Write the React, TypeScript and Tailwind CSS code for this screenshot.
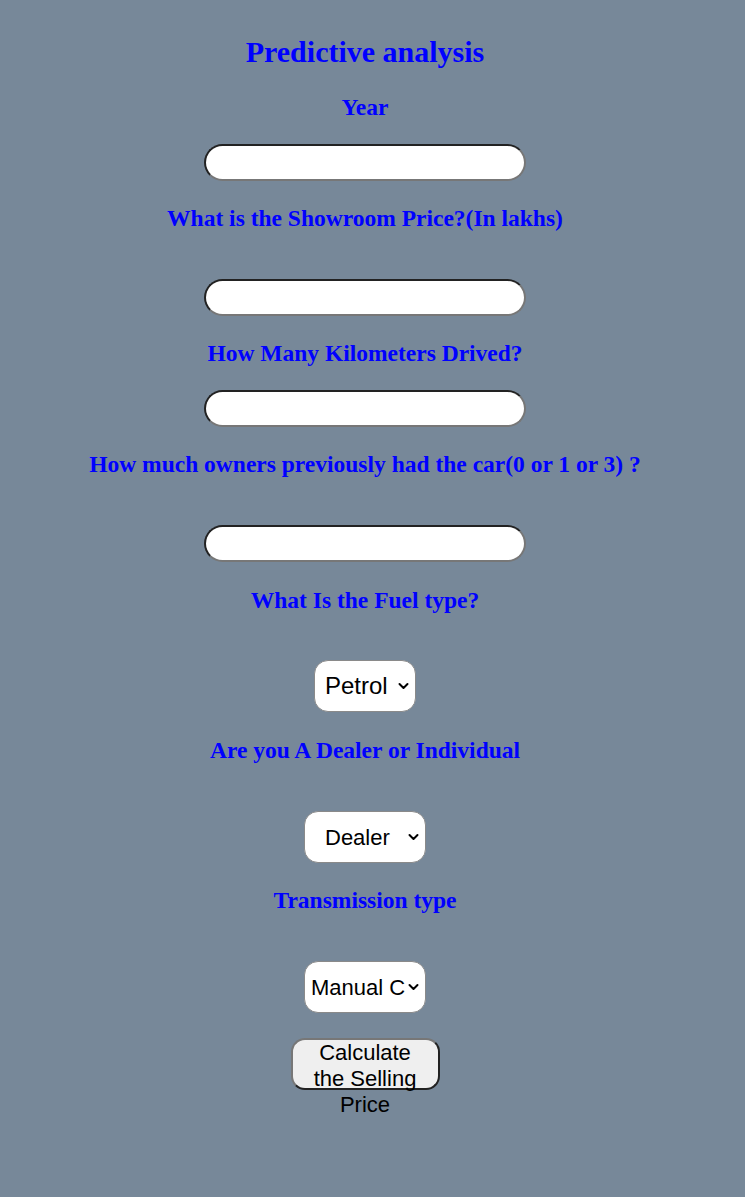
import { useState } from "react"

const label = "font-['Liberation_Serif',serif] font-bold text-[23.5px] leading-[28px] text-[#0000ff] text-center"
const input = "block w-[322px] h-[37px] rounded-full bg-white border-2 border-t-[#222] border-l-[#222] border-b-[#777] border-r-[#777] px-3 outline-none"
const select = "appearance-none bg-white rounded-[14px] border border-[#8a8a8a] h-[52px] text-black font-['Liberation_Sans',Arial,sans-serif] outline-none"

function Chevron() {
  return (
    <svg className="absolute right-[7px] top-1/2 -translate-y-1/2 pointer-events-none" width="11" height="8" viewBox="0 0 11 8">
      <path d="M1.5 2 L5.5 6 L9.5 2" fill="none" stroke="#000" strokeWidth="2" strokeLinecap="round" strokeLinejoin="round" />
    </svg>
  )
}

export default function App() {
  const [fuel, setFuel] = useState("Petrol")
  const [seller, setSeller] = useState("Dealer")
  const [trans, setTrans] = useState("Manual Car")

  return (
    <div className="min-h-[1197px] w-full bg-[#778899]">
      <div className="w-[730px] flex flex-col items-center pt-[34px]">
        <h1 className="font-['Liberation_Serif',serif] font-bold text-[30px] leading-[36px] text-[#0000ff]">Predictive analysis</h1>

        <p className={`${label} mt-[23px]`}>Year</p>
        <input className={`${input} mt-[23px]`} />

        <p className={`${label} mt-[23px]`}>What is the Showroom Price?(In lakhs)</p>
        <input className={`${input} mt-[47px]`} />

        <p className={`${label} mt-[23px]`}>How Many Kilometers Drived?</p>
        <input className={`${input} mt-[23px]`} />

        <p className={`${label} mt-[23px]`}>How much owners previously had the car(0 or 1 or 3) ?</p>
        <input className={`${input} mt-[47px]`} />

        <p className={`${label} mt-[24px]`}>What Is the Fuel type?</p>
        <div className="relative mt-[46px]">
          <select value={fuel} onChange={(e) => setFuel(e.target.value)} className={`${select} w-[102px] pl-[10px] text-[24px]`}>
            <option>Petrol</option>
            <option>Diesel</option>
            <option>CNG</option>
          </select>
          <Chevron />
        </div>

        <p className={`${label} mt-[24px]`}>Are you A Dealer or Individual</p>
        <div className="relative mt-[47px]">
          <select value={seller} onChange={(e) => setSeller(e.target.value)} className={`${select} w-[122px] pl-[20px] text-[22px]`}>
            <option>Dealer</option>
            <option>Individual</option>
          </select>
          <Chevron />
        </div>

        <p className={`${label} mt-[23px]`}>Transmission type</p>
        <div className="relative mt-[47px]">
          <select value={trans} onChange={(e) => setTrans(e.target.value)} className={`${select} w-[122px] pl-[6px] pr-[20px] text-[22px]`}>
            <option>Manual Car</option>
            <option>Automatic Car</option>
          </select>
          <Chevron />
        </div>

        <button className="mt-[25px] w-[149px] h-[52px] rounded-[14px] bg-[#efefef] border-2 border-t-[#777] border-l-[#777] border-b-[#222] border-r-[#222] font-['Liberation_Sans',Arial,sans-serif] text-[22px] leading-[26px] text-black flex flex-col items-center justify-start px-[14px]">
          <span className="block text-center">Calculate the Selling Price</span>
        </button>
      </div>
    </div>
  )
}
